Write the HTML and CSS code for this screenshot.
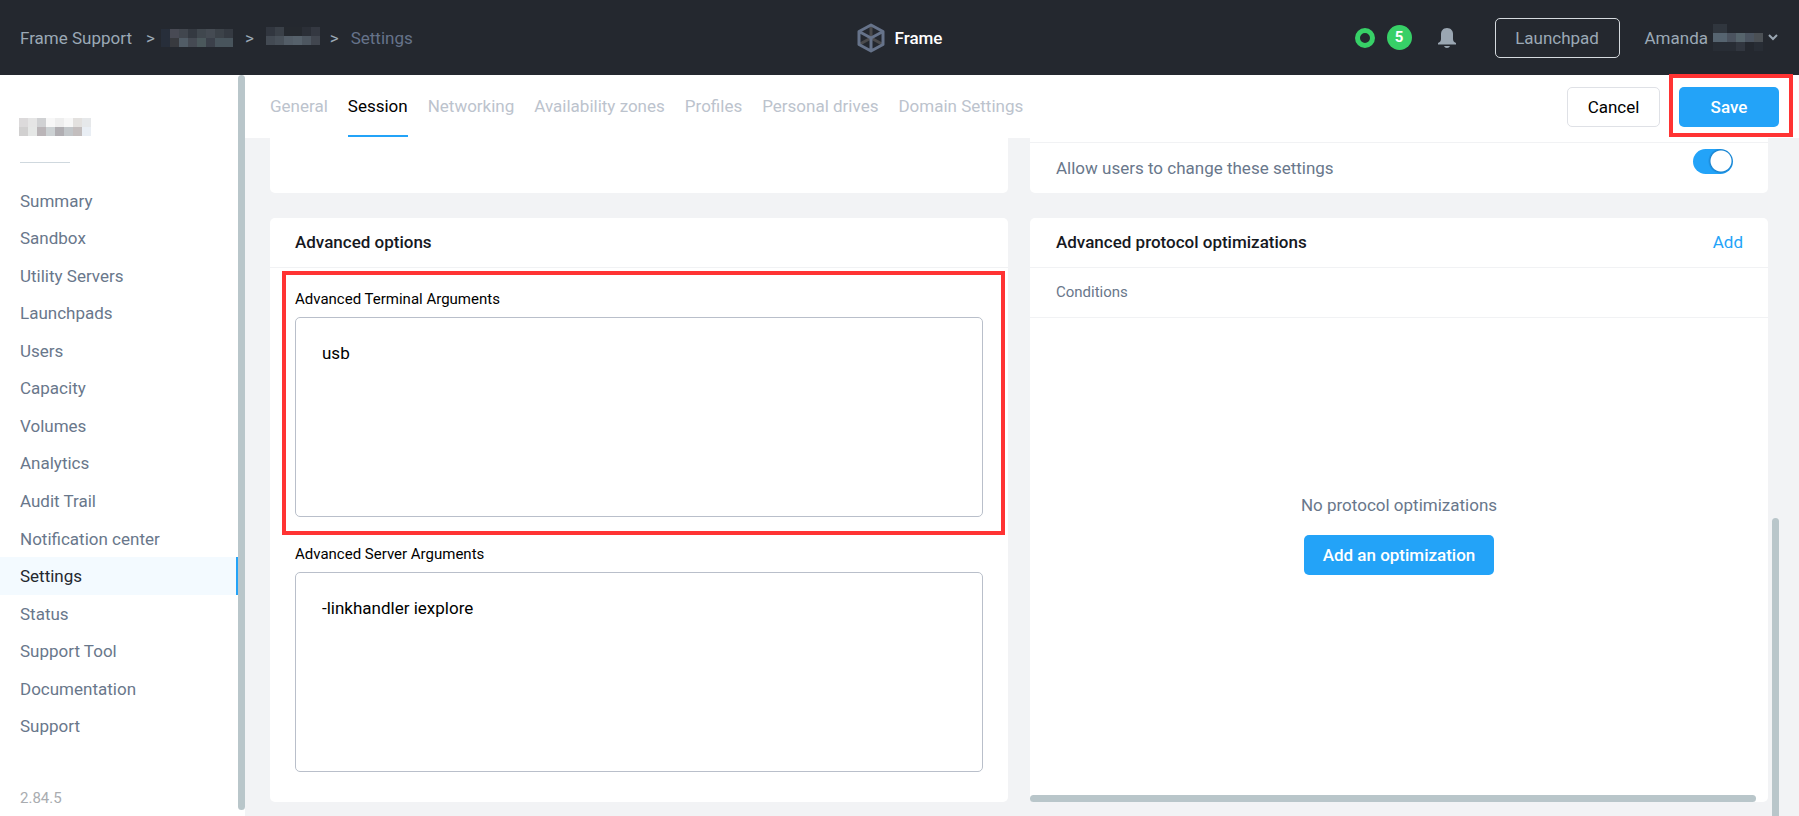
FILE: index.html
```html
<!DOCTYPE html>
<html lang="en">
<head>
<meta charset="utf-8">
<title>Frame - Settings</title>
<link rel="stylesheet" href="styles.css">
</head>
<body>
<header class="topbar">
  <nav class="crumbs" aria-label="Breadcrumb">
    <a href="#" class="crumb">Frame Support</a>
    <span class="sep first">&gt;</span>
    <svg class="mosaic" width="72" height="18" shape-rendering="crispEdges" aria-hidden="true">
      <path fill="#272e3a" d="M0 0h9v18H0z"/><path fill="#484a54" d="M9 0h9v9H9z"/><path fill="#41464e" d="M18 0h9v9h-9z"/><path fill="#343941" d="M27 0h9v9h-9z"/><path fill="#40474e" d="M36 0h9v9h-9z"/><path fill="#454b53" d="M45 0h9v9h-9z"/><path fill="#3c4249" d="M54 0h9v9h-9z"/><path fill="#353a42" d="M63 0h9v9h-9z"/>
      <path fill="#383a3f" d="M9 9h9v9H9z"/><path fill="#515c66" d="M18 9h9v9h-9z"/><path fill="#454a53" d="M27 9h9v9h-9z"/><path fill="#4b585c" d="M36 9h9v9h-9z"/><path fill="#3b404a" d="M45 9h9v9h-9z"/><path fill="#48545c" d="M54 9h18v9H54z"/>
    </svg>
    <span class="sep">&gt;</span>
    <svg class="mosaic raised" width="54" height="18" shape-rendering="crispEdges" aria-hidden="true">
      <path fill="#31363f" d="M0 0h9v9H0z"/><path fill="#3a4048" d="M9 0h9v9H9z"/><path fill="#25292f" d="M18 0h18v9H18z"/><path fill="#2b2f37" d="M36 0h9v9h-9z"/><path fill="#343841" d="M45 0h9v9h-9z"/>
      <path fill="#434a53" d="M0 9h9v9H0z"/><path fill="#485059" d="M9 9h9v9H9z"/><path fill="#535d67" d="M18 9h9v9h-9z"/><path fill="#56616b" d="M27 9h9v9h-9z"/><path fill="#4d5660" d="M36 9h9v9h-9z"/><path fill="#41464f" d="M45 9h9v9h-9z"/>
    </svg>
    <span class="sep last">&gt;</span>
    <span class="crumb current">Settings</span>
  </nav>
  <a href="#" class="brand">
    <svg width="28" height="30" viewBox="0 0 28 30" fill="none" stroke-width="3" stroke-linejoin="round" aria-hidden="true">
      <path stroke="#4b4b4d" d="M14 3v12M3 21l11-6 11 6"/>
      <path stroke="#66738a" d="M14 2l12 6.500v13L14 28 2 21.500v-13zM2 8.500L14 15l12-6.500M14 15v13"/>
    </svg>
    Frame
  </a>
  <div class="tools">
    <span class="ring"></span>
    <span class="count">5</span>
    <button class="bell" aria-label="Notifications">
      <svg width="18" height="20" viewBox="0 0 18 20" fill="#9aa6b2" aria-hidden="true"><path d="M9 0C5 0 3 3 3 6v5c0 2-1 3-3 4v1.500h18V15c-2-1-3-2-3-4V6c0-3-2-6-6-6zM6 18h6c-.5 1.300-1.600 2-3 2s-2.500-.7-3-2z"/></svg>
    </button>
    <button class="launchpad">Launchpad</button>
    <button class="user">Amanda
      <svg class="mosaic" width="50" height="27" shape-rendering="crispEdges" aria-hidden="true">
        <path fill="#30363e" d="M0 0h14v9H0z"/><path fill="#566470" d="M0 9h14v9H0z"/><path fill="#4b535f" d="M14 9h9v9h-9z"/><path fill="#56646c" d="M23 9h9v9h-9z"/><path fill="#4b5460" d="M32 9h9v9h-9z"/><path fill="#4b5055" d="M41 9h9v9h-9z"/><path fill="#282d35" d="M0 18h23v9H0z"/><path fill="#31363f" d="M23 18h9v9h-9z"/><path fill="#282d35" d="M41 18h9v9h-9z"/>
      </svg>
      <svg class="chev" width="10" height="7" viewBox="0 0 10 7" fill="none" stroke="#9aa6b2" stroke-width="2" aria-hidden="true"><path d="M1 1l4 4 4-4"/></svg>
    </button>
  </div>
</header>
<div class="body">
  <aside class="sidebar">
    <svg class="account" width="72" height="18" shape-rendering="crispEdges" aria-hidden="true">
      <path fill="#dcdadb" d="M0 0h9v9H0z"/><path fill="#e5e5e5" d="M9 0h9v9H9z"/><path fill="#d0d1d3" d="M18 0h9v9h-9z"/><path fill="#f7f7f7" d="M27 0h9v9h-9z"/><path fill="#eee" d="M36 0h9v9h-9z"/><path fill="#f7f7f7" d="M45 0h9v9h-9z"/><path fill="#e3e1df" d="M54 0h9v9h-9z"/><path fill="#e6e8ea" d="M63 0h9v9h-9z"/>
      <path fill="#d1d0d0" d="M0 9h9v9H0z"/><path fill="#e5e7e6" d="M9 9h9v9H9z"/><path fill="#bab5b8" d="M18 9h9v9h-9z"/><path fill="#ccd1d3" d="M27 9h9v9h-9z"/><path fill="#b0aeb2" d="M36 9h9v9h-9z"/><path fill="#c2c6c9" d="M45 9h9v9h-9z"/><path fill="#c3bebe" d="M54 9h9v9h-9z"/><path fill="#e9eef4" d="M63 9h9v9h-9z"/>
    </svg>
    <hr class="rule">
    <nav class="menu" aria-label="Account">
      <a href="#">Summary</a>
      <a href="#">Sandbox</a>
      <a href="#">Utility Servers</a>
      <a href="#">Launchpads</a>
      <a href="#">Users</a>
      <a href="#">Capacity</a>
      <a href="#">Volumes</a>
      <a href="#">Analytics</a>
      <a href="#">Audit Trail</a>
      <a href="#">Notification center</a>
      <a href="#" class="active" aria-current="page">Settings</a>
      <a href="#">Status</a>
      <a href="#">Support Tool</a>
      <a href="#">Documentation</a>
      <a href="#">Support</a>
    </nav>
    <p class="version">2.84.5</p>
    <div class="side-scroll"></div>
  </aside>
  <main class="main">
    <div class="tabbar">
      <nav class="tabs" aria-label="Settings sections">
        <a href="#">General</a>
        <a href="#" class="active">Session</a>
        <a href="#">Networking</a>
        <a href="#">Availability zones</a>
        <a href="#">Profiles</a>
        <a href="#">Personal drives</a>
        <a href="#">Domain Settings</a>
      </nav>
      <button class="btn cancel">Cancel</button>
      <div class="save-wrap"><button class="btn primary save">Save</button></div>
    </div>
    <div class="grid">
      <section class="card tail"></section>
      <section class="card tail">
        <div class="allow">
          <label for="allow">Allow users to change these settings</label>
          <input type="checkbox" role="switch" id="allow" class="switch" checked>
        </div>
      </section>
      <section class="card">
        <div class="card-head"><h2>Advanced options</h2></div>
        <div class="fields">
          <div class="field marked">
            <label for="term">Advanced Terminal Arguments</label>
            <textarea id="term" spellcheck="false">usb</textarea>
          </div>
          <div class="field">
            <label for="server">Advanced Server Arguments</label>
            <textarea id="server" spellcheck="false">-linkhandler iexplore</textarea>
          </div>
        </div>
      </section>
      <section class="card optim">
        <div class="card-head"><h2>Advanced protocol optimizations</h2><a href="#" class="add">Add</a></div>
        <div class="cond">Conditions</div>
        <div class="empty">
          <p>No protocol optimizations</p>
          <button class="btn primary">Add an optimization</button>
        </div>
        <div class="h-scroll"></div>
      </section>
    </div>
    <div class="v-scroll"></div>
  </main>
</div>
</body>
</html>
```

FILE: styles.css
```css
* { box-sizing: border-box; }

body {
  margin: 0;
  height: 100vh;
  display: flex;
  flex-direction: column;
  overflow: hidden;
  font: 17px/24px Roboto, "Liberation Sans", sans-serif;
  color: #000;
  background: #f2f3f5;
}

a { color: inherit; text-decoration: none; }
button { font: inherit; color: inherit; background: none; border: 0; padding: 0; cursor: pointer; }
h2, p { margin: 0; }
svg { display: block; flex: none; }

/* Top bar */
.topbar {
  flex: none;
  height: 75px;
  padding: 0 20px;
  display: grid;
  grid-template-columns: 1fr auto 1fr;
  align-items: center;
  background: #24282f;
  color: #9ba9b6;
}
.crumbs { display: flex; align-items: center; }
.sep { margin: 0 12px; }
.sep.first { margin: 0 6px 0 14px; }
.sep.last { margin-left: 10px; }
.raised { margin-bottom: 4px; }
.current { color: #66738a; }
.brand { display: flex; align-items: center; gap: 10px; color: #fff; font-weight: 500; }
.tools { display: flex; align-items: center; justify-content: flex-end; }
.ring { width: 20px; height: 20px; border: 5px solid #37d067; border-radius: 50%; }
.count {
  width: 25px;
  height: 25px;
  margin-left: 12px;
  border-radius: 50%;
  background: #37d067;
  color: #fff;
  font-size: 15px;
  font-weight: 700;
  line-height: 25px;
  text-align: center;
}
.bell { margin-left: 26px; }
.launchpad {
  width: 125px;
  height: 40px;
  margin: 0 25px 0 39px;
  border: 1px solid #d5dade;
  border-radius: 5px;
}
.user { display: flex; align-items: center; gap: 5px; padding-right: 1px; }

/* Sidebar */
.body { flex: 1; min-height: 0; display: flex; }
.sidebar {
  position: relative;
  flex: none;
  width: 245px;
  display: flex;
  flex-direction: column;
  background: #fff;
  color: #69778b;
}
.account { margin: 43px 0 0 19px; }
.rule { width: 50px; height: 1px; margin: 26px 0 19px 20px; border: 0; background: #cfd8de; }
.menu { flex: 1; display: grid; grid-auto-rows: 1fr; margin-right: 7px; }
.menu a { display: flex; align-items: center; padding-left: 20px; }
.menu .active { background: #f3faff; color: #24282f; border-right: 2px solid #23a3f8; }
.version { margin: 41px 0 6px 20px; font-size: 15px; color: #a9acb0; }
.side-scroll {
  position: absolute;
  top: 0;
  right: 0;
  bottom: 6px;
  width: 7px;
  border-radius: 4px;
  background: #b9c6ca;
}

/* Main column */
.main { position: relative; flex: 1; min-width: 0; display: flex; flex-direction: column; }
.tabbar {
  flex: none;
  height: 63px;
  padding: 0 6px 0 25px;
  display: flex;
  align-items: flex-start;
  background: #fff;
}
.tabs { flex: 1; display: flex; gap: 20px; color: #bcc3cd; }
.tabs a { padding: 19px 0 17px; border-bottom: 2px solid transparent; }
.tabs .active { color: #000; border-color: #23a3f8; }
.btn { height: 40px; padding: 0 19px; border-radius: 5px; }
.primary { background: #23a3f8; color: #fff; font-weight: 500; }
.cancel { width: 93px; margin: 12px 9px 0 0; border: 1px solid #dfe1e6; }
.save-wrap {
  position: relative;
  z-index: 1;
  margin-top: -1px;
  padding: 9px 10px 6px 6px;
  border: 4px solid #ff3333;
}
.save { display: block; width: 100px; }

.grid {
  flex: 1;
  display: grid;
  grid-template-columns: 1fr 1fr;
  grid-template-rows: 55px 1fr;
  gap: 25px 22px;
  padding: 0 31px 14px 25px;
}
.card { min-width: 0; display: flex; flex-direction: column; background: #fff; border-radius: 5px; }
.tail { border-radius: 0 0 5px 5px; padding-top: 4px; }
.allow {
  display: flex;
  justify-content: space-between;
  padding: 6px 35px 0 26px;
  border-top: 1px solid #f1f2f4;
  color: #69778b;
}
.allow label { padding-top: 7px; }
.switch {
  appearance: none;
  width: 40px;
  height: 25px;
  margin: 0;
  border-radius: 13px;
  background: radial-gradient(circle at 28px 12px, #fff 10px, #1a84d0 11px, #23a3f8 13px);
}
.card-head {
  display: flex;
  justify-content: space-between;
  padding: 12px 25px 13px;
  border-bottom: 1px solid #f1f2f4;
}
.card-head h2 { font-size: 17px; font-weight: 500; color: #16191f; }
.optim .card-head { padding-left: 26px; }
.add { color: #23a3f8; }
.fields { padding: 3px 3px 0 12px; display: flex; flex-direction: column; }
.field { padding: 7px 22px 0 13px; }
.field label { display: block; margin-bottom: 5px; font-size: 15px; line-height: 25px; }
.marked { border: 4px solid #ff3333; padding: 12px 18px 14px 9px; }
.field textarea {
  display: block;
  width: 100%;
  height: 200px;
  padding: 23px 26px;
  border: 1px solid #b9bfca;
  border-radius: 5px;
  font: inherit;
  color: #000;
  resize: none;
  outline: 0;
}
.cond { padding: 12px 26px 13px; border-bottom: 1px solid #f1f2f4; font-size: 15px; color: #69778b; }
.empty {
  flex: 1;
  display: flex;
  flex-direction: column;
  align-items: center;
  justify-content: center;
  gap: 18px;
  padding-bottom: 45px;
  color: #69778b;
}
.h-scroll { height: 7px; margin-right: 12px; border-radius: 4px; background: #b9c6ca; }
.v-scroll {
  position: absolute;
  right: 20px;
  bottom: 0;
  width: 7px;
  height: 298px;
  border-radius: 4px 4px 0 0;
  background: #b9c6ca;
}
```
